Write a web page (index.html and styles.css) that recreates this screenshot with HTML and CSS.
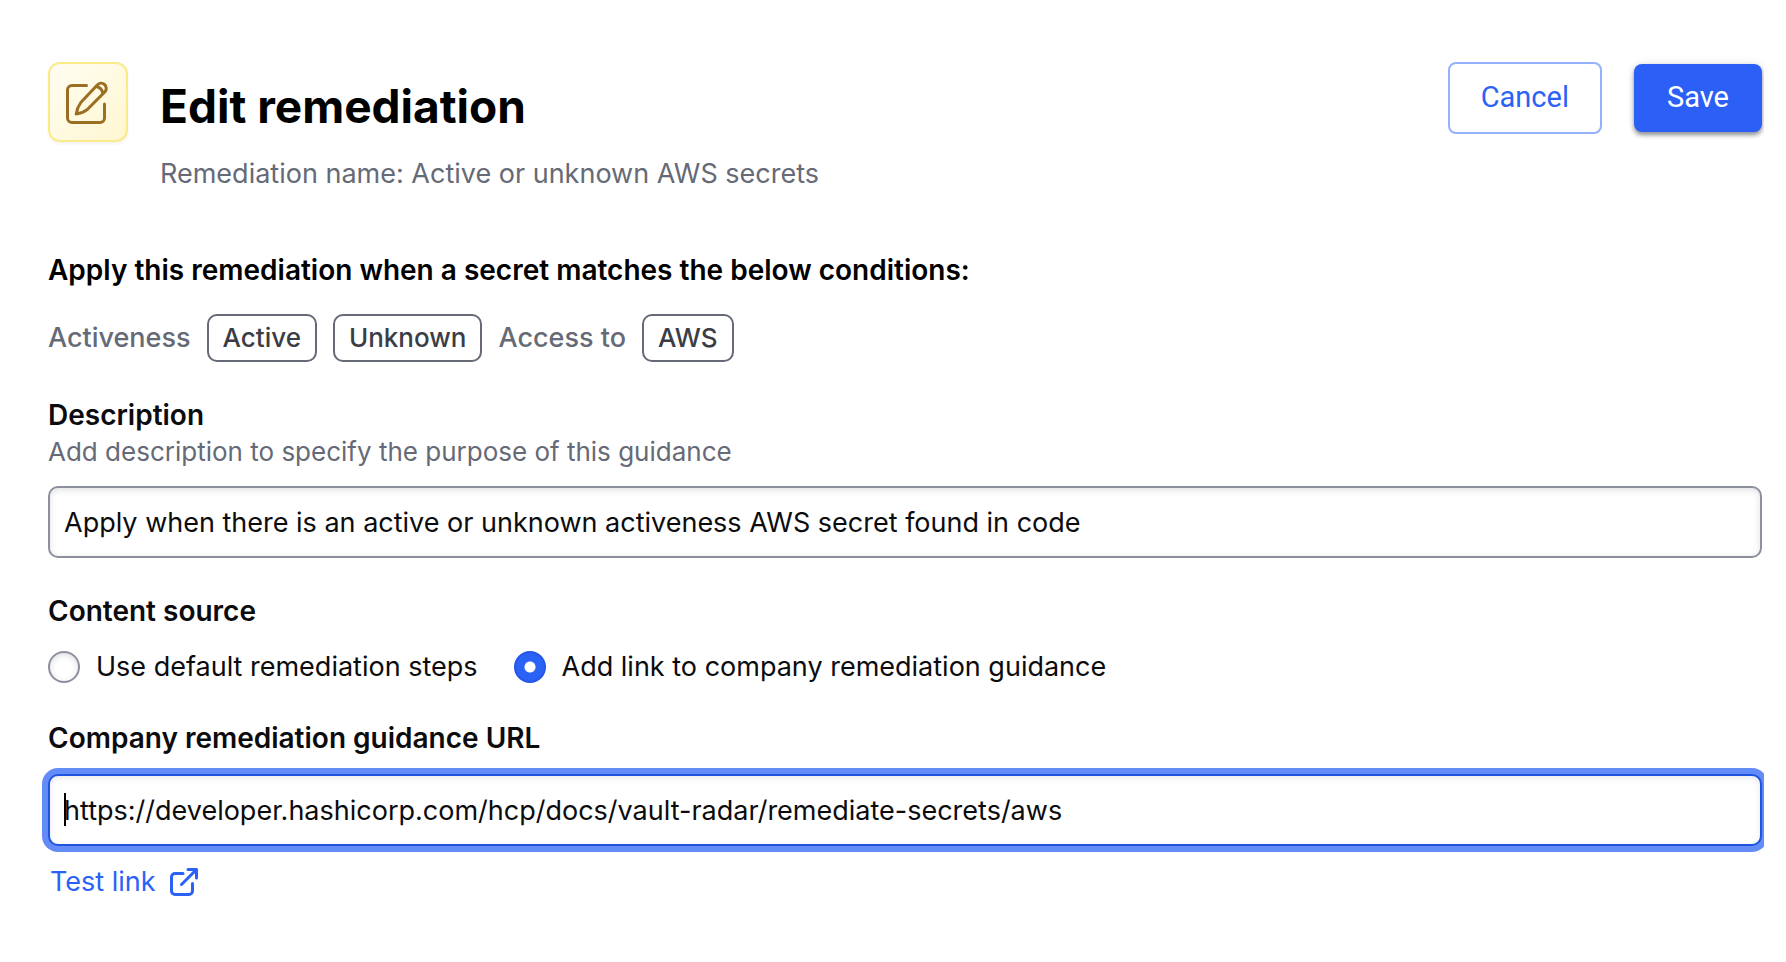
FILE: index.html
```html
<!DOCTYPE html>
<html lang="en">
<head>
<meta charset="utf-8">
<meta name="viewport" content="width=device-width, initial-scale=1">
<title>Edit remediation</title>
<link rel="stylesheet" href="styles.css">
</head>
<body>
<main class="page">
  <header class="page-header">
    <div class="icon-tile">
      <svg class="edit-icon" viewBox="0 0 48 48" fill="none" stroke="currentColor" stroke-width="3" stroke-linecap="round" stroke-linejoin="round" aria-hidden="true">
        <path d="M22.500 7.500H8A4.500 4.500 0 0 0 3.500 12V40A4.500 4.500 0 0 0 8 44.500H36A4.500 4.500 0 0 0 40.500 40V26"/>
        <path d="M33.300 7A4.800 4.800 0 0 1 41 13.700L23.500 31.300Q19 35 12.200 36Q13 29.800 16.800 24.500Z"/>
        <path d="M32.500 8.500Q37.500 9.500 38.800 15"/>
      </svg>
    </div>
    <div class="heading">
      <h1 class="title">Edit remediation</h1>
      <p class="subtitle">Remediation name: Active or unknown AWS secrets</p>
    </div>
    <div class="actions">
      <button type="button" class="button button-secondary">Cancel</button>
      <button type="button" class="button button-primary">Save</button>
    </div>
  </header>

  <section class="conditions">
    <h2 class="label">Apply this remediation when a secret matches the below conditions:</h2>
    <div class="tags">
      <span class="tag-name">Activeness</span>
      <span class="tag">Active</span>
      <span class="tag">Unknown</span>
      <span class="tag-name">Access to</span>
      <span class="tag">AWS</span>
    </div>
  </section>

  <form class="form">
    <div class="field">
      <label class="label" for="description">Description</label>
      <p class="helper" id="description-help">Add description to specify the purpose of this guidance</p>
      <input class="text-input" id="description" type="text" aria-describedby="description-help" value="Apply when there is an active or unknown activeness AWS secret found in code">
    </div>
    <fieldset class="field source">
      <legend class="label">Content source</legend>
      <div class="options">
        <label class="option" for="source-default"><input class="radio" type="radio" name="source" id="source-default">Use default remediation steps</label>
        <label class="option" for="source-link"><input class="radio" type="radio" name="source" id="source-link" checked>Add link to company remediation guidance</label>
      </div>
    </fieldset>
    <div class="field">
      <label class="label" for="url">Company remediation guidance URL</label>
      <div class="input-wrap">
        <input class="text-input text-input-active" id="url" type="text" value="https://developer.hashicorp.com/hcp/docs/vault-radar/remediate-secrets/aws">
        <span class="caret"></span>
      </div>
      <a class="link" href="#test">Test link
        <svg class="link-icon" viewBox="0 0 28 28" fill="none" stroke="currentColor" stroke-width="3" stroke-linecap="round" stroke-linejoin="round" aria-hidden="true">
          <path d="M13 5.500H5A3.500 3.500 0 0 0 1.500 9V23A3.500 3.500 0 0 0 5 26.500H19A3.500 3.500 0 0 0 22.500 23V15.500M18 1.500H26.500V10M26.500 1.500L11.500 16.500"/>
        </svg>
      </a>
    </div>
  </form>
</main>
</body>
</html>
```
FILE: styles.css
```css
* { box-sizing: border-box; }

body {
  margin: 0;
  background: #fff;
  color: #0c0c0e;
  font-family: Inter, "Liberation Sans", sans-serif;
  font-size: 27px;
  line-height: 36px;
}

h1, h2, p { margin: 0; }

/* The right edge trims the focus ring of wide inputs. */
.page {
  margin-right: 22px;
  padding: 62px 2px 60px 48px;
  overflow: hidden;
}

.page-header {
  display: flex;
  align-items: flex-start;
  gap: 32px;
}

.icon-tile {
  display: flex;
  align-items: center;
  justify-content: center;
  width: 80px;
  height: 80px;
  border: 2px solid #fbeb88;
  border-radius: 12px;
  background: linear-gradient(135deg, #fffdf2, #fff7d1);
  box-shadow: 0 2px 3px #656a7614;
  color: #9a6f21;
}

.edit-icon { width: 48px; height: 48px; }

.heading { flex: 1; padding-top: 12px; }

.title {
  color: #000;
  font-size: 46px;
  line-height: 64px;
  font-weight: 700;
}

.subtitle { margin-top: 18px; color: #656a76; }

.actions { display: flex; align-items: center; gap: 32px; }

.button {
  padding: 0 33px 2px;
  border: 0;
  border-radius: 8px;
  font-family: Roboto, sans-serif;
  font-size: 29px;
  font-weight: 400;
  line-height: 66px;
}

.button-secondary {
  padding: 0 31px 2px;
  border: 2px solid #95b1fb;
  background: #fff;
  color: #2b62f6;
}

.button-primary {
  background: #2b5ff6;
  color: #fff;
  box-shadow: 0 3px 4px #3b3d4588, 0 0 8px #3b3d4522;
}

.conditions { margin-top: 60px; }

.label { display: block; padding: 0; font-size: 28px; line-height: 36px; font-weight: 600; }

.conditions .label { color: #000; }

.tags { display: flex; align-items: center; gap: 16px; margin-top: 26px; }

.tag-name { color: #656a76; font-weight: 500; }

.tag {
  padding: 4px 14px;
  border: 2px solid #656a76;
  border-radius: 10px;
  color: #3b3d45;
  font-size: 26px;
  font-weight: 500;
}

.form { display: flex; flex-direction: column; gap: 35px; margin-top: 35px; }

.field { min-width: 0; margin: 0; padding: 0; border: 0; }

.helper { margin: 1px 0 16px; color: #656a76; font-size: 26px; }

.text-input {
  display: block;
  width: 100%;
  height: 72px;
  padding: 0 14px;
  border: 2px solid #8c909c;
  border-radius: 10px;
  outline: 0;
  background: #fff;
  box-shadow: inset 0 2px 6px #656a7633;
  color: #0c0c0e;
  font: inherit;
}

.text-input-active {
  border-color: #1f54e0;
  box-shadow: 0 0 0 6px #648cf9, inset 0 2px 6px #656a7626;
}

.options { display: flex; gap: 36px; margin-top: 20px; }

.option { display: flex; align-items: center; gap: 16px; }

.radio {
  appearance: none;
  width: 32px;
  height: 32px;
  margin: 0;
  border: 2px solid #8c909c;
  border-radius: 50%;
  background: #fff;
  box-shadow: inset 0 2px 6px #656a7633;
}

.radio:checked {
  border-color: #2457e8;
  background: radial-gradient(circle, #fff 0 5px, #2b62f6 6px);
  box-shadow: none;
}

.input-wrap { position: relative; margin-top: 18px; }

.caret {
  position: absolute;
  top: 19px;
  left: 16px;
  width: 2px;
  height: 33px;
  background: #000;
}

.link {
  display: inline-flex;
  align-items: center;
  gap: 14px;
  margin: 18px 0 0 2px;
  color: #2b62f6;
  text-decoration: none;
}

.link-icon { width: 28px; height: 28px; }
```
